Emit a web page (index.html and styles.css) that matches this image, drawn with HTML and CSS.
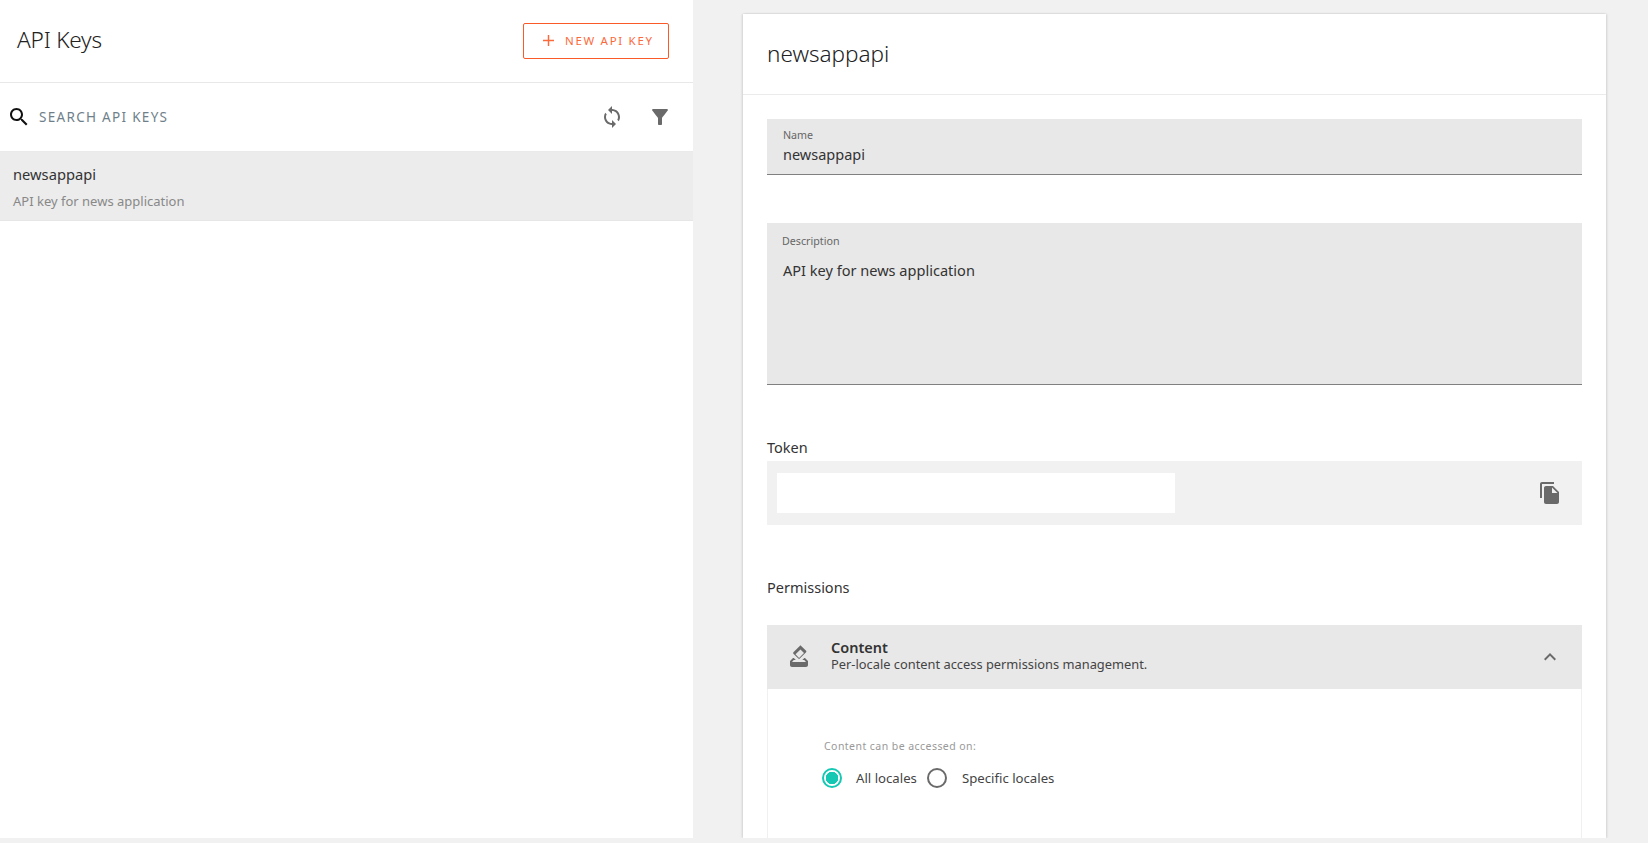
FILE: index.html
```html
<!DOCTYPE html>
<html lang="en">
<head>
<meta charset="utf-8">
<title>API Keys</title>
<link rel="stylesheet" href="styles.css">
</head>
<body>
<div class="page">
  <aside class="list-panel">
    <header class="list-header">
      <h1 class="list-title">API Keys</h1>
      <button class="new-btn" type="button">
        <svg class="plus" viewBox="0 0 12 12"><path d="M5.2 0h1.6v5.2H12v1.6H6.8V12H5.2V6.8H0V5.2h5.2z"/></svg>
        <span>NEW API KEY</span>
      </button>
    </header>
    <div class="search-row">
      <svg class="icon icon-black" viewBox="0 0 24 24"><path d="M15.5 14h-.79l-.28-.27C15.41 12.59 16 11.11 16 9.5 16 5.91 13.09 3 9.5 3S3 5.91 3 9.5 5.91 16 9.5 16c1.61 0 3.09-.59 4.23-1.57l.27.28v.79l5 4.99L20.49 19l-4.99-5zm-6 0C7.01 14 5 11.99 5 9.5S7.01 5 9.5 5 14 7.01 14 9.5 11.99 14 9.5 14z"/></svg>
      <span class="search-text">SEARCH API KEYS</span>
      <svg class="icon sync" viewBox="0 0 24 24"><path d="M12 4V1L8 5l4 4V6c3.31 0 6 2.69 6 6 0 1.01-.25 1.97-.7 2.8l1.46 1.46C19.54 15.03 20 13.57 20 12c0-4.42-3.58-8-8-8zm0 14c-3.31 0-6-2.69-6-6 0-1.01.25-1.97.7-2.8L5.24 7.74C4.46 8.97 4 10.43 4 12c0 4.42 3.58 8 8 8v3l4-4-4-4v3z"/></svg>
      <svg class="icon funnel" viewBox="0 0 24 24"><path d="M4.25 5.61C6.27 8.2 10 13 10 13v6c0 .55.45 1 1 1h2c.55 0 1-.45 1-1v-6s3.72-4.8 5.74-7.39A.998.998 0 0018.95 4H5.04c-.83 0-1.3.95-.79 1.61z"/></svg>
    </div>
    <div class="key-row">
      <div class="key-name">newsappapi</div>
      <div class="key-desc">API key for news application</div>
    </div>
  </aside>
  <main class="detail-area">
    <section class="card">
      <header class="card-header"><h2 class="card-title">newsappapi</h2></header>
      <div class="card-body">
        <div class="field field-name">
          <div class="field-label">Name</div>
          <div class="field-value">newsappapi</div>
        </div>
        <div class="field field-desc">
          <div class="field-label label-desc">Description</div>
          <div class="field-value value-desc">API key for news application</div>
        </div>
        <div class="section-label token-label">Token</div>
        <div class="token-box">
          <div class="token-mask"></div>
          <svg class="icon" viewBox="0 0 24 24"><path d="M16 1H4c-1.1 0-2 .9-2 2v14h2V3h12V1zm-1 4l6 6v10c0 1.1-.9 2-2 2H7.99C6.89 23 6 22.1 6 21l.01-14c0-1.1.89-2 1.99-2h7zm-1 7h5.5L14 6.5V12z"/></svg>
        </div>
        <div class="section-label perm-label">Permissions</div>
        <div class="panel">
          <div class="panel-head">
            <svg class="icon" viewBox="0 0 24 24"><path d="M18 13h-.68l-2 2h1.91L19 17H5l1.78-2h2.05l-2-2H6l-3 3v4c0 1.1.89 2 1.99 2H19c1.1 0 2-.89 2-2v-4l-3-3zm-1-5.05l-4.95 4.95-3.54-3.54 4.95-4.95L17 7.95zm-4.24-7.07L6.39 7.25c-.39.39-.39 1.02 0 1.41l4.95 4.95c.39.39 1.02.39 1.41 0l6.36-6.36c.39-.39.39-1.02 0-1.41L14.16.88c-.38-.4-1.01-.4-1.4 0z"/></svg>
            <div class="panel-text">
              <div class="panel-title">Content</div>
              <div class="panel-sub">Per-locale content access permissions management.</div>
            </div>
            <svg class="icon chevron" viewBox="0 0 24 24"><path d="M12 8l-6 6 1.41 1.41L12 10.83l4.59 4.58L18 14z"/></svg>
          </div>
          <div class="panel-body">
            <div class="access-label">Content can be accessed on:</div>
            <div class="radios">
              <span class="radio radio-on"></span><span class="radio-text first">All locales</span>
              <span class="radio"></span><span class="radio-text second">Specific locales</span>
            </div>
          </div>
        </div>
      </div>
    </section>
  </main>
</div>
</body>
</html>
```
FILE: styles.css
```css
* { box-sizing: border-box; }
html, body { margin: 0; height: 843px; overflow: hidden; background: #f1f1f1; }
body { font-family: "Noto Sans", "Liberation Sans", sans-serif; color: #333; }
.page { display: flex; height: 838px; overflow: hidden; }
.icon { width: 24px; height: 24px; fill: #6a6a6a; flex: none; display: block; }
.icon-black { fill: #111; }

.list-panel { width: 693px; flex: none; background: #fff; }
.list-header { height: 83px; border-bottom: 1px solid #e8e8e8; display: flex; align-items: center; justify-content: space-between; padding: 0 24px 1px 17px; }
.list-title { margin: 0 0 2px; font-size: 22.6px; font-weight: 300; color: #222; letter-spacing: -0.2px; }
.new-btn { width: 146px; height: 36px; border: 1px solid #fa5a28; border-radius: 2px; background: #fff; display: flex; align-items: center; padding: 0 0 0 19px; font: inherit; }
.new-btn span { font-size: 11.5px; letter-spacing: 1.7px; color: #fb6a3c; margin-left: 11px; white-space: nowrap; }
.plus { width: 11px; height: 11px; fill: #fb6a3c; flex: none; }

.search-row { height: 69px; display: flex; align-items: center; padding: 0 21px 0 7px; border-bottom: 1px solid #eaeaea; }
.search-text { font-size: 13.5px; color: #6f7f8a; letter-spacing: 1.3px; margin-left: 8px; flex: 1; }
.sync { margin-right: 24px; }

.key-row { height: 69px; background: #ececec; border-bottom: 1px solid #e6e6e6; padding: 12px 13px 0; }
.key-name { font-size: 14.7px; line-height: 20px; color: #333; }
.key-desc { font-size: 13px; line-height: 18px; margin-top: 8px; color: #888; }

.detail-area { flex: 1; padding: 14px 42px 0 50px; overflow: hidden; }
.card { background: #fff; height: 824px; overflow: hidden; box-shadow: -1px 0 2px rgba(0,0,0,.12), 1px 0 2px rgba(0,0,0,.12); }
.card-header { height: 81px; border-bottom: 1px solid #ebebeb; display: flex; align-items: center; padding: 0 24px 2px 24px; }
.card-title { margin: 0; font-size: 22.5px; font-weight: 300; color: #222; }
.card-body { padding: 24px 24px 0; }

.field { background: #e8e8e8; border-bottom: 1px solid #808080; padding-left: 16px; }
.field-name { height: 56px; padding-top: 9px; }
.field-label { font-size: 10.7px; line-height: 14px; color: #666; }
.field-value { font-size: 14.5px; line-height: 20px; margin-top: 2px; color: #333; }
.field-desc { height: 162px; margin-top: 48px; padding-top: 11px; }
.label-desc { margin-left: -1px; }
.value-desc { margin-top: 12px; font-size: 14.55px; }

.section-label { font-size: 14.5px; line-height: 20px; color: #333; }
.token-label { margin-top: 52px; }
.token-box { height: 64px; margin-top: 4px; background: #f1f1f1; display: flex; align-items: flex-start; justify-content: space-between; padding: 12px 20px 0 10px; }
.token-box .icon { margin-top: 8px; }
.token-mask { width: 398px; height: 40px; background: #fff; }
.perm-label { margin-top: 52px; }

.panel { margin-top: 28px; }
.panel-head { height: 64px; background: #e8e8e8; display: flex; align-items: center; padding: 0 20px; }
.panel-text { flex: 1; margin: 0 0 4px 20px; }
.panel-title { font-size: 14.5px; font-weight: 600; line-height: 18px; color: #333; }
.panel-sub { font-size: 12.85px; line-height: 17px; color: #444; }
.chevron { margin-right: 0; }
.panel-body { height: 200px; border-left: 1px solid #f0f0f0; border-right: 1px solid #f0f0f0; padding: 49px 0 0 50px; }
.access-label { font-size: 10.5px; line-height: 16px; color: #999; letter-spacing: 0.45px; margin-left: 6px; }
.radios { display: flex; align-items: center; margin-top: 14px; margin-left: 4px; }
.radio { width: 20px; height: 20px; border-radius: 50%; border: 2px solid #6a6a6a; flex: none; background: #fff; }
.radio-on { border-color: #14c8b4; background: radial-gradient(circle, #14c8b4 0, #14c8b4 6px, #fff 6.5px); }
.radio-text { font-size: 13.2px; color: #444; }
.radio-text.first { margin: 0 10px 0 14px; }
.radio-text.second { margin-left: 15px; }
```
